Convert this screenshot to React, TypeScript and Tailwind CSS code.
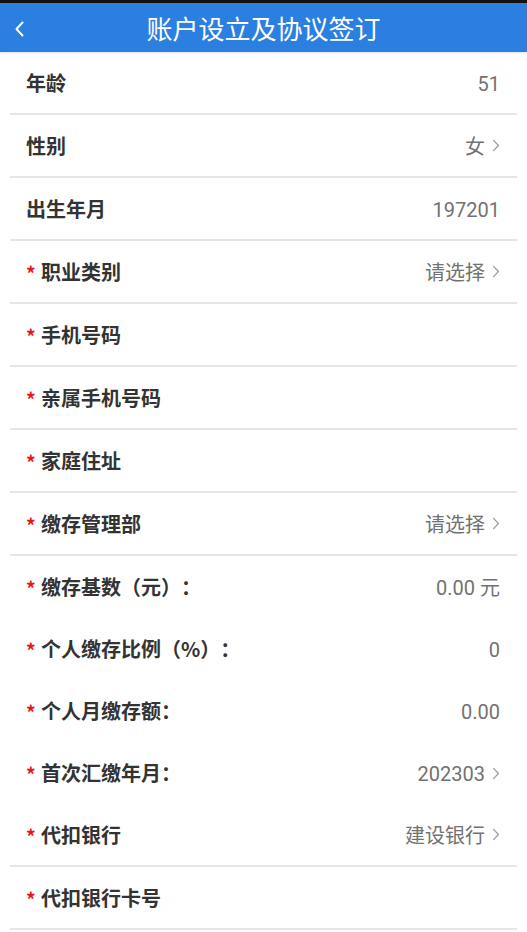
import React from 'react';

type Row = {
    label: string;
    value?: string;
    required?: boolean;
    arrow?: boolean;
    line?: boolean;
};

const rows: Row[] = [
    { label: '年龄', value: '51', line: true },
    { label: '性别', value: '女', arrow: true, line: true },
    { label: '出生年月', value: '197201', line: true },
    { label: '职业类别', value: '请选择', required: true, arrow: true, line: true },
    { label: '手机号码', required: true, line: true },
    { label: '亲属手机号码', required: true, line: true },
    { label: '家庭住址', required: true, line: true },
    { label: '缴存管理部', value: '请选择', required: true, arrow: true, line: true },
    { label: '缴存基数（元）：', value: '0.00 元', required: true },
    { label: '个人缴存比例（%）：', value: '0', required: true },
    { label: '个人月缴存额：', value: '0.00', required: true },
    { label: '首次汇缴年月：', value: '202303', required: true, arrow: true },
    { label: '代扣银行', value: '建设银行', required: true, arrow: true, line: true },
    { label: '代扣银行卡号', required: true, line: true },
];

const Chevron: React.FC<{ className?: string; left?: boolean }> = ({ className, left }) => (
    <svg viewBox="0 0 10 16" className={className} fill="none" stroke="currentColor" strokeLinecap="round" strokeLinejoin="round">
        {left ? <path d="M8 1.5 L2 8 L8 14.5" /> : <path d="M2 1.5 L8 8 L2 14.5" />}
    </svg>
);

const App: React.FC = () => {
    return (
        <div className="w-[527px] min-h-[932px] bg-white overflow-hidden [text-spacing-trim:space-all]" style={{ fontFamily: '"Noto Sans CJK SC", sans-serif' }}>
            {/* status strip + title bar */}
            <div className="h-[3px] bg-[#111]" />
            <div className="relative h-[49px] bg-[#2b7fe0] flex items-center justify-center shadow-[0_1px_2px_rgba(0,0,0,0.12)]">
                <button className="absolute left-[14px] top-[18px] text-white">
                    <Chevron left className="w-[11px] h-[16px] stroke-[2]" />
                </button>
                <h1 className="text-white text-[26px] leading-none">账户设立及协议签订</h1>
            </div>

            {/* form rows */}
            <div className="mx-[10px]">
                {rows.map((row, idx) => (
                    <div
                        key={idx}
                        className={row.line ? 'h-[63px] border-b-2 border-[#e6e6e6] flex items-center pl-[16px] pr-[17px]' : 'h-[62px] flex items-center pl-[16px] pr-[17px]'}
                    >
                        <div className="flex items-center">
                            {row.required && <span className="text-[#e8151b] text-[19px] font-bold w-[15px] leading-none pt-[1px]">*</span>}
                            <span className="text-[20px] leading-none font-bold text-[#333]">{row.label}</span>
                        </div>
                        <div className="ml-auto flex items-center text-[#727272] text-[20px] leading-none">
                            {row.value && <span className="pt-[2px]" style={{ fontFamily: 'Roboto, "Noto Sans CJK SC", sans-serif' }}>{row.value}</span>}
                            {row.arrow && <Chevron className="w-[8px] h-[13px] ml-[7px] text-[#9a9a9a] stroke-[1.5]" />}
                        </div>
                    </div>
                ))}
            </div>
        </div>
    );
};

export default App;
